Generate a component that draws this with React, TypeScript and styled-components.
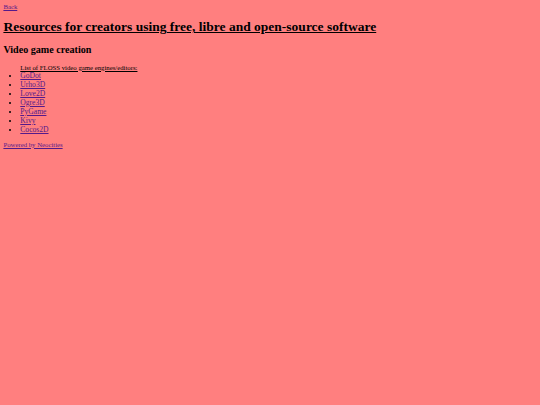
import React from "react";
import styled, { createGlobalStyle } from "styled-components";

// Reference is a 1280px-wide page shown at 540px, so everything is scaled by 0.421875.
const GlobalStyle = createGlobalStyle`
  html, body {
    margin: 0;
    background: #ff7f7f;
  }
  body {
    padding: 3.4px;
    font-family: "Liberation Serif", "Times New Roman", serif;
    font-size: 6.75px;
    color: #000;
  }
`;

const Link = styled.a`
  color: #551a8b;
  text-decoration: underline;
`;

const Title = styled.h1`
  font-size: 13.5px;
  font-weight: bold;
  text-decoration: underline;
  margin: 9px 0;
`;

const Section = styled.h2`
  font-size: 10.1px;
  font-weight: bold;
  margin: 8.4px 0;
`;

const List = styled.ul`
  margin: 6.75px 0;
  padding-left: 16.9px;
`;

const Caption = styled.span`
  text-decoration: underline;
`;

const Item = styled.li`
  list-style: disc;
  font-size: 7.6px;
`;

const engines = ["GoDot", "Urho3D", "Love2D", "Ogre3D", "PyGame", "Kivy", "Cocos2D"];

export default function App() {
  return (
    <>
      <GlobalStyle />
      <Link href="#">Back</Link>
      <Title>Resources for creators using free, libre and open-source software</Title>
      <Section>Video game creation</Section>
      <List>
        <Caption>List of FLOSS video game engines/editors:</Caption>
        {engines.map((e) => (
          <Item key={e}>
            <Link href="#">{e}</Link>
          </Item>
        ))}
      </List>
      <Link href="#">Powered by Neocities</Link>
    </>
  );
}
